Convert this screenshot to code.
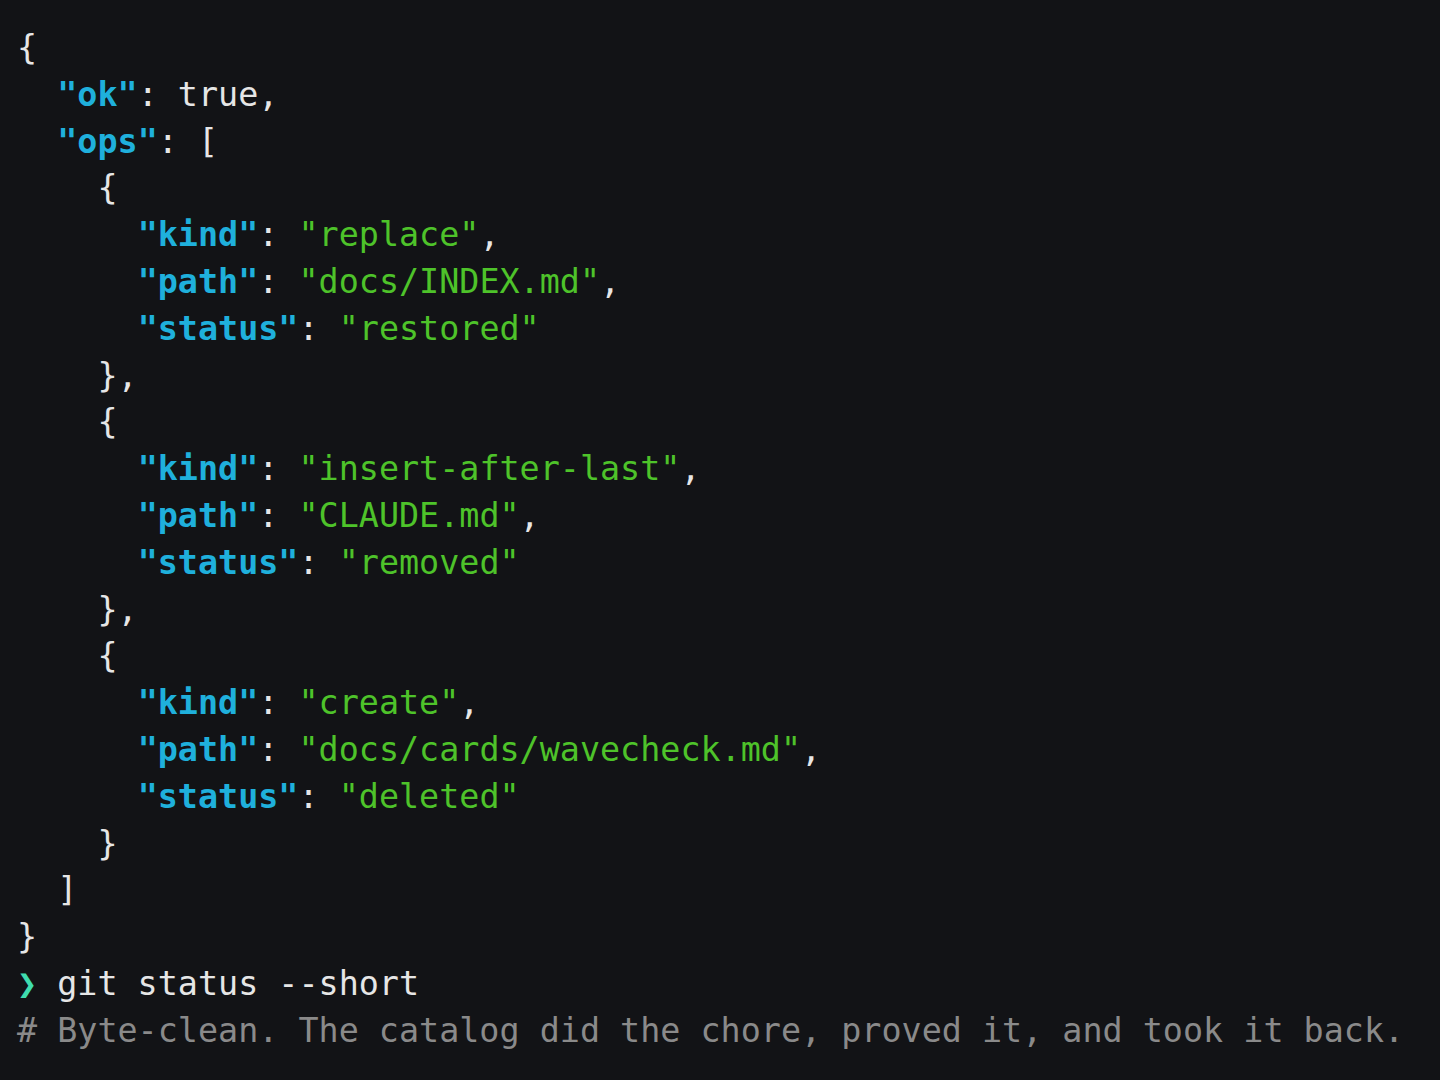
const K = ({ children }: { children: string }) => (
  <span className="font-bold text-[#1fb0dc]">{children}</span>
);
const S = ({ children }: { children: string }) => (
  <span className="text-[#4ec32a]">{children}</span>
);

const ops = [
  { kind: "replace", path: "docs/INDEX.md", status: "restored" },
  { kind: "insert-after-last", path: "CLAUDE.md", status: "removed" },
  { kind: "create", path: "docs/cards/wavecheck.md", status: "deleted" },
];

export default function App() {
  return (
    <div className="min-h-screen w-full bg-[#121316] pl-[17px] pt-[25px] text-[33.4px] leading-[46.8px] text-[#e6e6e6] font-['DejaVu_Sans_Mono',monospace] whitespace-pre">
      <div>{"{"}</div>
      <div>
        {"  "}
        <K>"ok"</K>: true,
      </div>
      <div>
        {"  "}
        <K>"ops"</K>: [
      </div>
      {ops.map((op, i) => (
        <div key={i}>
          <div>{"    {"}</div>
          <div>
            {"      "}
            <K>"kind"</K>: <S>{`"${op.kind}"`}</S>,
          </div>
          <div>
            {"      "}
            <K>"path"</K>: <S>{`"${op.path}"`}</S>,
          </div>
          <div>
            {"      "}
            <K>"status"</K>: <S>{`"${op.status}"`}</S>
          </div>
          <div>{i < ops.length - 1 ? "    }," : "    }"}</div>
        </div>
      ))}
      <div>{"  ]"}</div>
      <div>{"}"}</div>
      <div>
        <span className="text-[#3fdcae]">❯</span> git status --short
      </div>
      <div className="text-[#8a8a8a]">
        # Byte-clean. The catalog did the chore, proved it, and took it back.
      </div>
    </div>
  );
}
